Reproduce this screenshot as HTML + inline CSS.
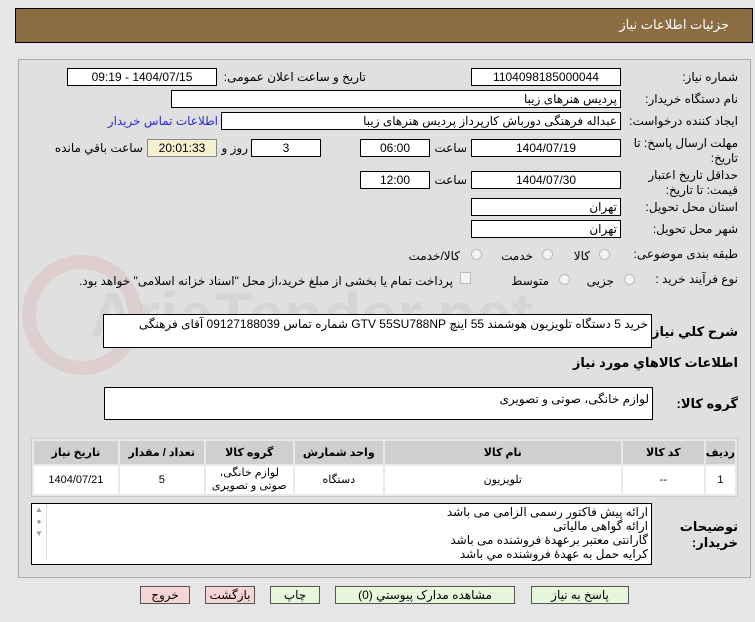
<!DOCTYPE html>
<html><head><meta charset="utf-8"><style>
*{margin:0;padding:0;box-sizing:border-box}
body{width:755px;height:622px;background:#e6e6e6;font-family:"Liberation Sans","DejaVu Sans",sans-serif;font-size:12px;color:#000;position:relative;overflow:hidden}
.a{position:absolute;white-space:nowrap}
.box{position:absolute;background:#fff;border:1px solid #000;text-align:center;line-height:16px;direction:rtl;white-space:nowrap;overflow:hidden}
.r{text-align:right;padding-right:3px}
.lbl{position:absolute;direction:rtl;text-align:right;white-space:nowrap}
.rad{position:absolute;width:11px;height:11px;border-radius:50%;border:1px solid #bbb;background:#f4f4f4}
.btn{position:absolute;top:586px;height:18px;border:1px solid #555;text-align:center;line-height:16px;direction:rtl}
table{position:absolute;left:31px;top:438px;width:707px;border-collapse:separate;border-spacing:2px;background:#e8e8e8;border:1px solid #ccc;direction:rtl}
th{background:#cfcfcf;height:23px;font-weight:bold;font-size:11px}
td{background:#fff;height:28px;text-align:center;font-size:11px;line-height:13px}
</style></head><body>
<div class="a" style="left:15px;top:8px;width:738px;height:35px;background:#8c6c42;border:1px solid #000"></div>
<div class="a" style="right:26px;top:17px;color:#fff;font-size:13px">جزئیات اطلاعات نیاز</div>
<div class="a" style="left:18px;top:59px;width:733px;height:519px;background:#e0e0e0;border:1px solid #aaa"></div>
<div class="a" style="left:90px;top:280px;font-size:62px;font-weight:bold;color:rgba(150,150,150,0.14);letter-spacing:1px">AriaTender.net</div>
<div class="a" style="left:22px;top:255px;width:120px;height:120px;border:14px solid rgba(200,90,90,0.13);border-radius:50%"></div>

<div class="lbl" style="right:17px;top:70px">شماره نیاز:</div>
<div class="box" style="left:471px;top:68px;width:150px;height:18px">1104098185000044</div>
<div class="lbl" style="right:389px;top:70px">تاریخ و ساعت اعلان عمومی:</div>
<div class="box" style="left:67px;top:68px;width:150px;height:18px">1404/07/15 - 09:19</div>

<div class="lbl" style="right:17px;top:92px">نام دستگاه خریدار:</div>
<div class="box r" style="left:171px;top:90px;width:450px;height:18px">پردیس هنرهای زیبا</div>

<div class="lbl" style="right:17px;top:114px">ایجاد کننده درخواست:</div>
<div class="box r" style="left:221px;top:112px;width:400px;height:18px">عبداله فرهنگی دورباش کارپرداز پردیس هنرهای زیبا</div>
<div class="lbl" style="right:537px;top:114px;color:#2a2ad8">اطلاعات تماس خریدار</div>

<div class="lbl" style="right:17px;top:136px;line-height:15px">مهلت ارسال پاسخ: تا<br>تاریخ:</div>
<div class="box" style="left:471px;top:139px;width:150px;height:18px">1404/07/19</div>
<div class="lbl" style="right:288px;top:141px">ساعت</div>
<div class="box" style="left:360px;top:139px;width:70px;height:18px">06:00</div>
<div class="box" style="left:251px;top:139px;width:70px;height:18px">3</div>
<div class="lbl" style="right:507px;top:141px">روز و</div>
<div class="box" style="left:147px;top:139px;width:70px;height:18px;background:#f5f0cf;border-color:#888">20:01:33</div>
<div class="lbl" style="right:612px;top:141px">ساعت باقي مانده</div>

<div class="lbl" style="right:17px;top:168px;line-height:15px">حداقل تاریخ اعتبار<br>قیمت: تا تاریخ:</div>
<div class="box" style="left:471px;top:171px;width:150px;height:18px">1404/07/30</div>
<div class="lbl" style="right:288px;top:173px">ساعت</div>
<div class="box" style="left:360px;top:171px;width:70px;height:18px">12:00</div>

<div class="lbl" style="right:17px;top:200px">استان محل تحویل:</div>
<div class="box r" style="left:471px;top:198px;width:150px;height:18px">تهران</div>
<div class="lbl" style="right:17px;top:222px">شهر محل تحویل:</div>
<div class="box r" style="left:471px;top:220px;width:150px;height:18px">تهران</div>

<div class="lbl" style="right:17px;top:247px">طبقه بندی موضوعی:</div>
<div class="rad" style="left:599px;top:249px"></div><div class="lbl" style="right:165px;top:249px">کالا</div>
<div class="rad" style="left:542px;top:249px"></div><div class="lbl" style="right:222px;top:249px">خدمت</div>
<div class="rad" style="left:471px;top:249px"></div><div class="lbl" style="right:295px;top:249px">کالا/خدمت</div>

<div class="lbl" style="right:17px;top:272px">نوع فرآیند خرید :</div>
<div class="rad" style="left:624px;top:274px"></div><div class="lbl" style="right:141px;top:274px">جزیی</div>
<div class="rad" style="left:559px;top:274px"></div><div class="lbl" style="right:206px;top:274px">متوسط</div>
<div class="a" style="left:460px;top:272px;width:11px;height:12px;border:1px solid #bbb;background:#f4f4f4"></div>
<div class="lbl" style="right:302px;top:274px">پرداخت تمام یا بخشی از مبلغ خرید،از محل "اسناد خزانه اسلامی" خواهد بود.</div>

<div class="lbl" style="right:17px;top:324px;font-weight:bold;font-size:13px">شرح کلي نياز:</div>
<div class="box r" style="left:103px;top:314px;width:549px;height:34px;text-align:right;line-height:18px">خرید 5 دستگاه تلویزیون هوشمند 55 اینچ GTV 55SU788NP شماره تماس 09127188039 آقای فرهنگی</div>
<div class="lbl" style="right:17px;top:355px;font-weight:bold;font-size:13px">اطلاعات كالاهاي مورد نياز</div>
<div class="lbl" style="right:17px;top:396px;font-weight:bold;font-size:13px">گروه کالا:</div>
<div class="box r" style="left:104px;top:387px;width:549px;height:33px;text-align:right;line-height:18px;padding-top:2px">لوازم خانگی، صوتی و تصویری</div>

<table><tr><th style="width:27px">ردیف</th><th style="width:81px">کد کالا</th><th style="width:236px">نام کالا</th><th style="width:88px">واحد شمارش</th><th style="width:87px">گروه کالا</th><th style="width:84px">تعداد / مقدار</th><th>تاریخ نیاز</th></tr>
<tr><td>1</td><td>--</td><td>تلویزیون</td><td>دستگاه</td><td>لوازم خانگی،<br>صوتی و تصویری</td><td>5</td><td>1404/07/21</td></tr></table>

<div class="lbl" style="right:17px;top:519px;font-weight:bold;font-size:13px;line-height:16px">توضیحات<br>خریدار:</div>
<div class="box" style="left:31px;top:503px;width:621px;height:62px;text-align:right;padding-right:3px;line-height:14px;font-size:12px;padding-top:1px">ارائه پیش فاکتور رسمی الزامی می باشد<br>ارائه گواهی مالیاتی<br>گارانتی معتبر برعهدۀ فروشنده می باشد<br>کرایه حمل به عهدۀ فروشنده مي باشد</div>
<div class="a" style="left:32px;top:504px;width:15px;height:55px;border-right:1px solid #ddd;color:#999;font-size:8px;text-align:center;line-height:12px">▲<br>●<br>▼</div>

<div class="btn" style="left:531px;width:98px;background:#e6f7dc">پاسخ به نیاز</div>
<div class="btn" style="left:335px;width:180px;background:#e6f7dc">مشاهده مدارک پیوستي (0)</div>
<div class="btn" style="left:270px;width:50px;background:#e6f7dc">چاپ</div>
<div class="btn" style="left:205px;width:50px;background:#f7d4d4">بازگشت</div>
<div class="btn" style="left:140px;width:50px;background:#f7d4d4">خروج</div>
</body></html>
